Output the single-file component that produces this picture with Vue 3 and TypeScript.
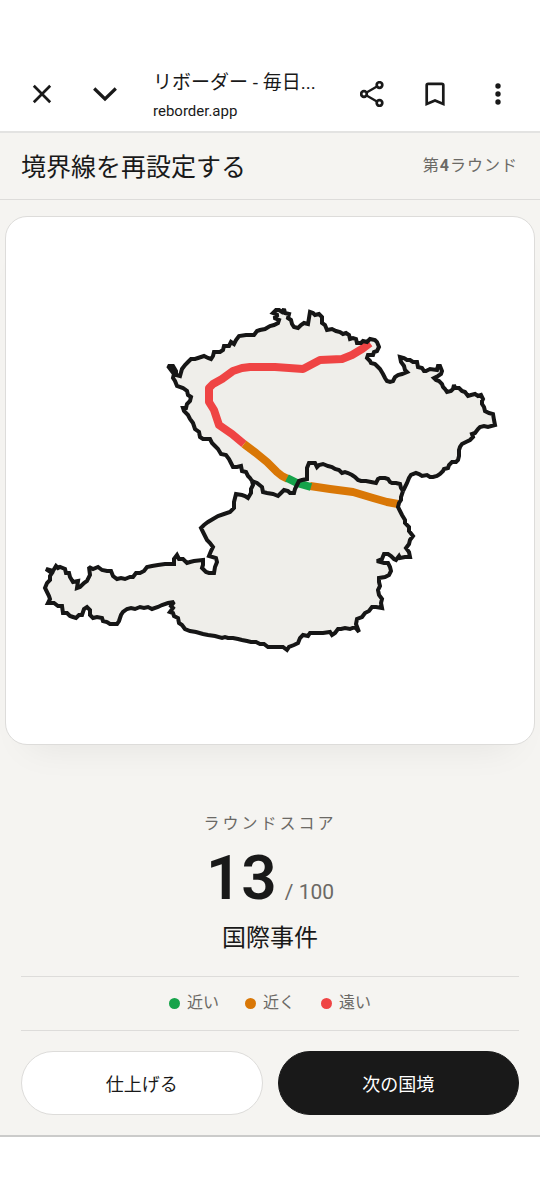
<script setup lang="ts">
interface LegendItem {
  label: string
  tone: 'close' | 'near' | 'far'
}

const legend: LegendItem[] = [
  { label: '近い', tone: 'close' },
  { label: '近く', tone: 'near' },
  { label: '遠い', tone: 'far' },
]

const score = 13

// Border shared by both countries, from the western to the eastern end
const sharedBorder =
  '252,481 257,483 262,487 263,492 267,493 273,494 278,496 281,493 284,490 288,491 290,493 294,493 295,489 297,485 299,481 302,480 307,479 307,473 307,468 309,463 315,463 317,467 319,465 323,464 328,466 332,467 335,469 339,470 342,473 345,472 348,473 352,475 355,477 358,480 361,481 366,481 371,482 376,483 378,479 380,478 385,478 388,479 390,482 392,483 396,483 400,484 401,488 403,491'

const northEdge =
  '403,491 405,487 407,483 409,478 411,475 416,473 419,474 422,476 427,475 430,477 433,477 437,476 440,474 443,471 444,469 448,468 449,465 452,462 456,462 458,460 459,456 459,450 460,447 462,444 466,442 470,440 473,437 472,434 475,433 478,429 480,427 484,426 488,427 495,425 494,420 493,414 489,413 485,411 484,407 482,404 482,401 483,399 481,395 478,396 475,394 471,395 468,396 465,392 462,391 459,388 455,388 454,385 453,389 451,391 447,392 445,389 443,387 442,384 439,381 436,380 434,378 438,376 441,374 442,371 440,366 438,366 437,370 430,369 426,371 424,371 422,368 418,367 417,362 413,362 410,360 407,360 404,358 400,357 401,362 404,366 405,370 407,372 402,374 398,375 395,377 393,381 390,382 387,381 385,378 383,374 380,369 377,366 375,364 371,363 370,361 367,358 368,355 373,355 374,352 377,351 379,347 377,342 375,340 370,339 367,342 363,341 361,343 357,343 356,339 353,338 350,339 349,335 346,333 343,334 340,332 336,331 332,329 327,330 325,325 322,323 322,317 319,314 315,315 313,313 310,312 309,318 308,324 304,323 301,325 298,328 294,327 292,324 291,320 288,318 289,314 285,313 284,309 282,312 279,310 276,310 273,313 278,315 274,318 279,320 278,323 274,325 270,326 265,329 260,330 257,331 254,335 246,335 239,336 236,340 234,344 231,342 229,346 224,346 223,350 220,352 214,352 213,356 211,359 208,358 204,356 198,358 195,359 191,359 188,362 185,365 182,369 180,376 176,375 176,371 173,366 168,366 171,370 174,374 173,378 175,381 177,386 183,388 187,391 188,395 191,397 190,401 187,404 186,408 183,408 184,411 188,415 190,419 193,423 195,429 199,432 200,437 203,439 210,439 212,443 215,446 218,449 221,454 226,455 229,459 231,463 233,467 237,467 241,466 242,471 246,472 248,476 250,478 252,481'

const southEdge =
  '403,491 401,497 401,500 399,503 398,507 400,511 402,515 405,520 405,523 409,527 409,531 413,536 410,540 409,544 406,548 409,552 410,557 405,557 400,558 399,556 396,560 394,559 391,556 388,554 384,554 382,559 377,561 384,563 388,563 390,567 391,571 389,575 385,577 379,578 379,582 380,586 378,590 379,595 382,599 381,603 382,608 376,607 372,607 369,611 365,613 362,617 357,619 356,624 359,632 355,627 350,629 345,628 341,629 338,629 335,633 332,635 330,632 323,633 316,633 310,633 308,636 303,635 300,638 298,643 294,645 289,647 287,650 283,647 276,647 268,647 264,644 260,644 256,642 251,642 247,641 242,640 238,639 233,638 228,638 225,637 222,638 215,636 208,635 203,634 196,632 190,631 185,629 182,625 179,623 178,618 174,616 173,613 170,612 173,608 171,606 174,602 168,603 162,605 158,607 152,609 148,607 144,608 140,607 135,609 131,608 127,609 123,612 121,615 119,621 117,624 110,624 107,622 103,621 102,618 97,617 93,618 90,615 90,610 87,607 84,609 82,615 79,615 76,618 73,617 70,616 67,613 63,613 62,606 58,606 54,603 48,603 50,599 49,596 47,592 45,588 47,583 50,580 50,576 52,573 46,569 53,571 56,566 58,568 60,567 65,569 66,573 69,573 70,577 73,582 78,581 77,588 80,587 84,583 87,581 90,575 89,567 93,569 98,567 102,570 107,571 111,571 113,576 117,579 121,578 125,579 130,577 133,577 136,573 140,573 144,571 147,567 152,566 158,565 165,564 174,564 174,559 177,555 179,559 183,559 187,563 190,562 194,561 203,560 203,565 202,568 206,572 209,573 214,573 215,567 217,562 216,558 209,556 211,551 213,547 210,543 207,540 205,536 203,532 201,528 204,525 208,522 213,519 218,516 224,514 230,512 234,508 234,502 236,494 242,495 245,496 248,498 251,493 251,489 253,485 252,481'
</script>

<template>
  <div class="screen">
    <header class="browser">
      <button class="tool" type="button" aria-label="閉じる">
        <svg viewBox="0 0 24 24"><path d="M3.800 3.800 20.200 20.200M20.200 3.800 3.800 20.200" /></svg>
      </button>
      <button class="tool" type="button" aria-label="最小化">
        <svg viewBox="0 0 24 24"><path d="M1.200 6.500 12 17 22.800 6.500" stroke-width="3.200" /></svg>
      </button>
      <div class="page">
        <div class="page-title">リボーダー - 毎日...</div>
        <div class="page-host">reborder.app</div>
      </div>
      <button class="tool" type="button" aria-label="共有">
        <svg viewBox="0 0 24 26">
          <path d="M19.500 4 4 13l15.500 9" stroke-width="2.300" />
          <g class="rings">
            <circle cx="19.500" cy="4" r="2.800" />
            <circle cx="4" cy="13" r="2.800" />
            <circle cx="19.500" cy="22" r="2.800" />
          </g>
        </svg>
      </button>
      <button class="tool" type="button" aria-label="ブックマーク">
        <svg viewBox="0 0 24 24"><path d="M3.700 22V3.200Q3.700 1.800 5.200 1.800h13.600Q20.300 1.800 20.300 3.200V22L12 18.500z" /></svg>
      </button>
      <button class="tool" type="button" aria-label="メニュー">
        <svg viewBox="0 0 24 24" class="dots">
          <circle cx="12" cy="4" r="2.700" />
          <circle cx="12" cy="12" r="2.700" />
          <circle cx="12" cy="20" r="2.700" />
        </svg>
      </button>
    </header>

    <main class="game">
      <div class="heading">
        <h1>境界線を再設定する</h1>
        <span class="round">第<b>4</b>ラウンド</span>
      </div>

      <section class="map-card">
        <svg class="map" viewBox="6 217 528 527" role="img" aria-label="国境の地図">
          <polygon class="land" :points="northEdge + ' ' + sharedBorder" />
          <polygon class="land" :points="southEdge + ' ' + sharedBorder" />
          <g class="guess">
            <polyline class="far" points="370,343 362,349 352,355 342,359 320,360 303,369 275,367 250,367 242,368 233,371 222,379 213,384 209,388 209,402 214,410 219,425 232,434 244,444" />
            <polyline class="near" points="244,444 256,453 267,462 277,472 282,476 288,479" />
            <polyline class="near" points="310,486 330,489 353,492 373,498 387,502 398,504" />
            <polyline class="close" points="287,478 297,483 311,487" />
          </g>
          <g class="outline">
            <polyline :points="northEdge" />
            <polyline :points="southEdge" />
            <polyline :points="sharedBorder" />
          </g>
        </svg>
      </section>

      <section class="result">
        <h2>ラウンドスコア</h2>
        <p class="score"><strong>{{ score }}</strong><span>/ 100</span></p>
        <p class="verdict">国際事件</p>
      </section>

      <ul class="legend">
        <li v-for="item in legend" :key="item.tone">
          <i class="dot" :class="item.tone"></i>{{ item.label }}
        </li>
      </ul>

      <div class="actions">
        <button class="action" type="button">仕上げる</button>
        <button class="action primary" type="button">次の国境</button>
      </div>
    </main>
  </div>
</template>

<style>
body {
  margin: 0;
  background: #fff;
}
</style>

<style scoped>
.screen {
  padding-top: 56px;
  color: #191919;
  font-family: Roboto, "Noto Sans CJK JP", sans-serif;
}
.browser {
  display: flex;
  align-items: center;
  height: 75px;
  padding: 0 11px 0 10px;
  border-bottom: 2px solid #e3e3e2;
}
.tool {
  flex: none;
  display: grid;
  place-items: center;
  width: 63px;
  height: 63px;
  padding: 0;
  border: 0;
  background: none;
  color: #191919;
}
.tool svg {
  width: 24px;
  height: 26px;
  fill: none;
  stroke: currentColor;
  stroke-width: 2.7;
}
.tool .rings {
  fill: #fff;
}
.tool .dots {
  fill: currentColor;
  stroke: none;
}
.page {
  flex: 1;
  min-width: 0;
  padding: 4px 12px 0 17px;
}
.page-title {
  overflow: hidden;
  white-space: nowrap;
  text-overflow: ellipsis;
  font-size: 19px;
  line-height: 30px;
}
.page-host {
  font-size: 15px;
  line-height: 26px;
}
.game {
  background: #f5f4f1;
  border-bottom: 2px solid #cbcbca;
}
.heading {
  display: flex;
  align-items: center;
  justify-content: space-between;
  height: 66px;
  padding: 0 22px 0 21px;
  border-bottom: 1px solid #dddcda;
}
h1 {
  margin: 0;
  padding-top: 4px;
  font-size: 25px;
  font-weight: 400;
  line-height: 36px;
}
.round {
  color: #6b6965;
  font-size: 16px;
  line-height: 24px;
  letter-spacing: 1px;
}
.round b {
  font-weight: 700;
}
.map-card {
  margin: 16px 5px 0;
  overflow: hidden;
  border: 1px solid #dddcda;
  border-radius: 22px;
  background: #fff;
  box-shadow: 0 24px 36px -24px rgba(0, 0, 0, 0.08);
}
.map {
  display: block;
  width: 100%;
}
.land {
  fill: #efeeea;
}
.outline {
  fill: none;
  stroke: #161616;
  stroke-width: 4;
  stroke-linejoin: miter;
  stroke-miterlimit: 2;
}
.guess {
  fill: none;
  stroke-width: 8;
  stroke-linejoin: round;
}
.guess .far {
  stroke: #ef4444;
}
.guess .near {
  stroke: #d97706;
}
.guess .close {
  stroke: #16a34a;
}
.result {
  padding: 65px 22px 20px;
  text-align: center;
}
h2 {
  margin: 0;
  color: #6b6965;
  font-size: 16px;
  font-weight: 400;
  line-height: 28px;
  letter-spacing: 3px;
}
.score {
  display: flex;
  align-items: baseline;
  justify-content: center;
  gap: 8px;
  margin: 6px 0 0;
}
.score strong {
  font-size: 62px;
  font-weight: 600;
  line-height: 68px;
}
.score span {
  color: #6b6965;
  font-size: 21px;
}
.verdict {
  margin: 8px 0 0;
  font-size: 24px;
  line-height: 36px;
}
.legend {
  display: flex;
  justify-content: center;
  gap: 26px;
  margin: 0 21px;
  padding: 12px 0 13px;
  border: solid #dddcda;
  border-width: 1px 0;
  color: #6b6965;
  font-size: 16px;
  line-height: 28px;
  list-style: none;
}
.legend li {
  display: flex;
  align-items: center;
  gap: 7px;
}
.dot {
  width: 11px;
  height: 11px;
  border-radius: 50%;
}
.dot.close {
  background: #16a34a;
}
.dot.near {
  background: #d97706;
}
.dot.far {
  background: #ef4444;
}
.actions {
  display: grid;
  grid-template-columns: 1fr 1fr;
  gap: 15px;
  padding: 20px 21px;
}
.action {
  height: 64px;
  padding: 0;
  border: 1px solid #dddcda;
  border-radius: 32px;
  background: #fff;
  color: #191919;
  font-family: inherit;
  font-size: 18px;
}
.action.primary {
  border-color: #191919;
  background: #191919;
  color: #fff;
}
</style>
